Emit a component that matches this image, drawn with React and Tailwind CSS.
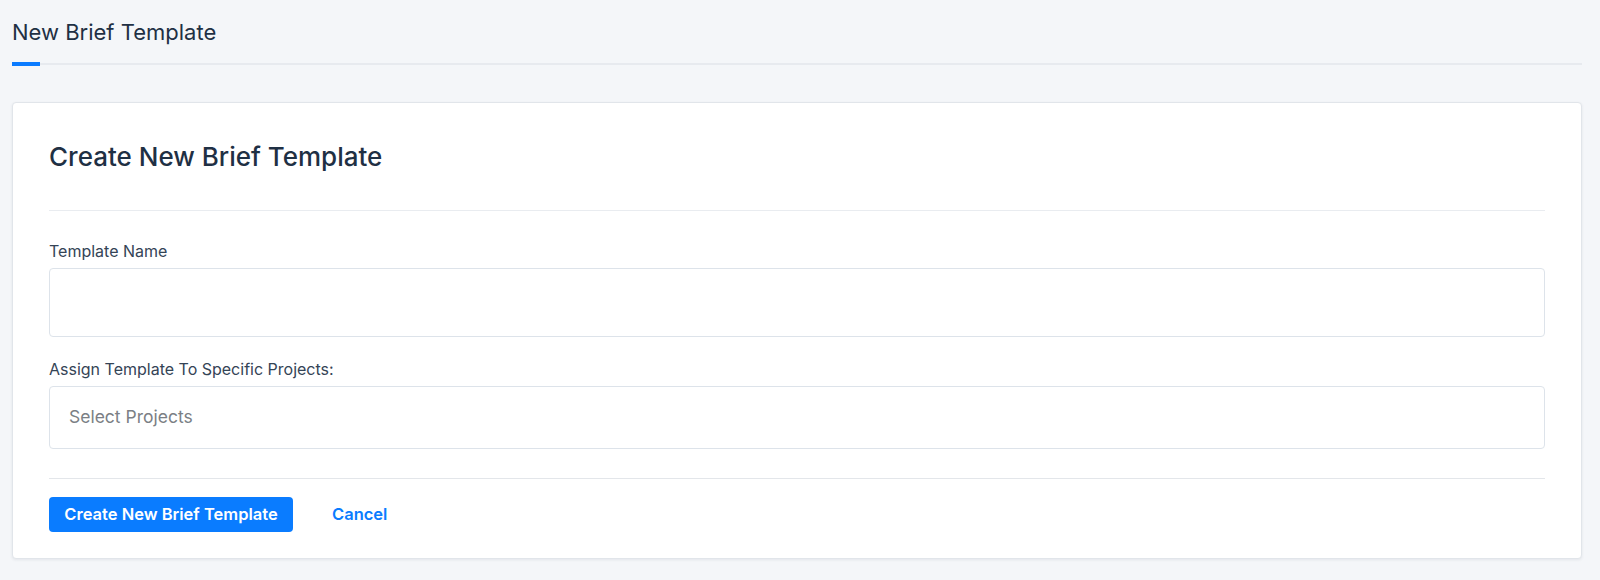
import React, { useState } from "react";

const App = () => {
  const [templateName, setTemplateName] = useState("");

  return (
    <div
      className="min-h-[580px] bg-[#f4f6f9] pl-3 pr-[18px] pt-[18px]"
      style={{ fontFamily: "Inter, 'Noto Sans', sans-serif" }}
    >
      {/* Page header with tab underline */}
      <div className="relative border-b-2 border-[#e7eaef] pb-[17px]">
        <h1 className="text-[22px] leading-[28px] font-normal text-[#1f3044]">
          New Brief Template
        </h1>
        <span className="absolute left-0 bottom-[-3px] h-1 w-7 bg-[#0a7bff]" />
      </div>

      {/* Card */}
      <div className="mt-[37px] rounded-[4px] border border-[#e1e5ea] bg-white px-9 pt-[38px] pb-[26px] shadow-[0_1px_3px_rgba(20,40,70,0.08)]">
        <h2 className="text-[26px] leading-[32px] font-medium text-[#1f3044]">
          Create New Brief Template
        </h2>
        <div className="mt-[37px] border-t border-[#e9ecf0]" />

        {/* Template name */}
        <label className="mt-[30px] block text-[16px] leading-[20px] text-[#344456]">
          Template Name
        </label>
        <input
          value={templateName}
          onChange={(e) => setTemplateName(e.target.value)}
          className="mt-[7px] block h-[69px] w-full rounded-[4px] border border-[#dde3ea] px-[19px] text-[17px] text-[#1f3044] focus:outline-none"
        />

        {/* Projects select */}
        <label className="mt-[22px] block text-[16px] leading-[20px] text-[#344456]">
          Assign Template To Specific Projects:
        </label>
        <div className="mt-[7px] flex h-[63px] w-full items-center rounded-[4px] border border-[#dde3ea] px-[19px] text-[17.5px] text-[#7b7f85]">
          Select Projects
        </div>

        <div className="mt-[29px] border-t border-[#e3e6ea]" />

        {/* Actions */}
        <div className="mt-[18px] flex items-center gap-[39px]">
          <button className="h-[35px] w-[244px] rounded-[4px] bg-[#0a7cff] text-[16.5px] font-semibold text-white">
            Create New Brief Template
          </button>
          <button className="text-[16.5px] font-semibold text-[#0a7cff]">Cancel</button>
        </div>
      </div>
    </div>
  );
};

export default App;
